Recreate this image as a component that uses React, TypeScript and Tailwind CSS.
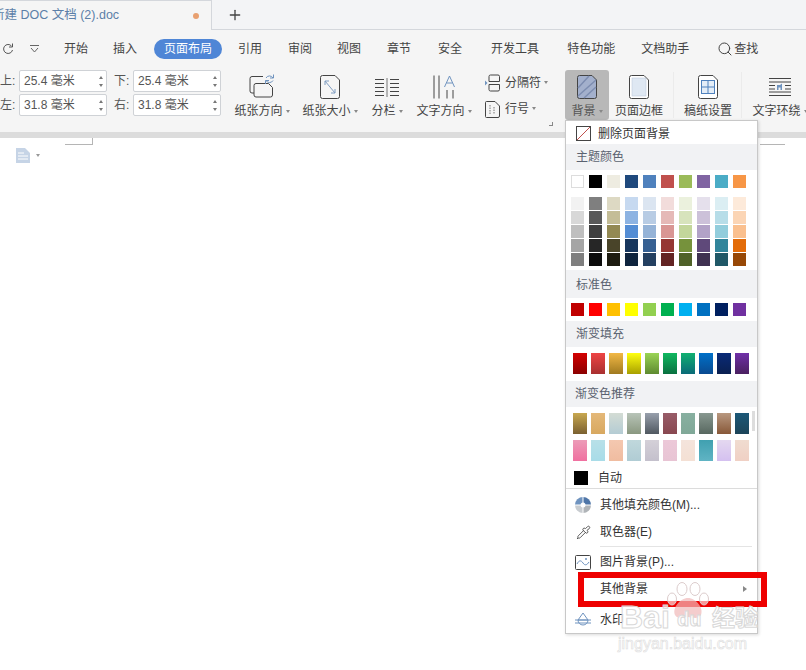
import { Pipette, Plus, Search } from "lucide-react";

const tabs = [
  { label: "开始", className: "ml-[25px]" },
  { label: "插入", className: "ml-[25px]" },
  { label: "页面布局", className: "ml-[17px] w-[68px] h-[20px] rounded-full bg-[#4f86d6] text-white text-center leading-[20px]" },
  { label: "引用", className: "ml-[16px]" },
  { label: "审阅", className: "ml-[26px]" },
  { label: "视图", className: "ml-[25px]" },
  { label: "章节", className: "ml-[26px]" },
  { label: "安全", className: "ml-[27px]" },
  { label: "开发工具", className: "ml-[29px]" },
  { label: "特色功能", className: "ml-[28px]" },
  { label: "文档助手", className: "ml-[26px]" },
];

const themeColors = [
  "bg-white border border-[#dddddd]",
  "bg-[#000000]",
  "bg-[#eeece1]",
  "bg-[#1f497d]",
  "bg-[#4f81bd]",
  "bg-[#c0504d]",
  "bg-[#9bbb59]",
  "bg-[#8064a2]",
  "bg-[#4bacc6]",
  "bg-[#f79646]",
];

const tints = [
  ["bg-[#f2f2f2]", "bg-[#d8d8d8]", "bg-[#bfbfbf]", "bg-[#a5a5a5]", "bg-[#7f7f7f]"],
  ["bg-[#7f7f7f]", "bg-[#595959]", "bg-[#3f3f3f]", "bg-[#262626]", "bg-[#0c0c0c]"],
  ["bg-[#ddd9c3]", "bg-[#c4bd97]", "bg-[#938953]", "bg-[#494429]", "bg-[#1d1b10]"],
  ["bg-[#c6d9f0]", "bg-[#8db3e2]", "bg-[#548dd4]", "bg-[#17365d]", "bg-[#0f243e]"],
  ["bg-[#dbe5f1]", "bg-[#b8cce4]", "bg-[#95b3d7]", "bg-[#366092]", "bg-[#244061]"],
  ["bg-[#f2dcdb]", "bg-[#e5b9b7]", "bg-[#d99694]", "bg-[#953734]", "bg-[#632423]"],
  ["bg-[#ebf1dd]", "bg-[#d7e3bc]", "bg-[#c3d69b]", "bg-[#76923c]", "bg-[#4f6128]"],
  ["bg-[#e5e0ec]", "bg-[#ccc1d9]", "bg-[#b2a2c7]", "bg-[#5f497a]", "bg-[#3f3151]"],
  ["bg-[#dbeef3]", "bg-[#b7dde8]", "bg-[#92cddc]", "bg-[#31859b]", "bg-[#205867]"],
  ["bg-[#fdeada]", "bg-[#fbd5b5]", "bg-[#fac08f]", "bg-[#e36c09]", "bg-[#974806]"],
];

const standardColors = [
  "bg-[#c00000]",
  "bg-[#ff0000]",
  "bg-[#ffc000]",
  "bg-[#ffff00]",
  "bg-[#92d050]",
  "bg-[#00b050]",
  "bg-[#00b0f0]",
  "bg-[#0070c0]",
  "bg-[#002060]",
  "bg-[#7030a0]",
];

const gradientFills = [
  "bg-[linear-gradient(#d40000,#8a0000)]",
  "bg-[linear-gradient(#ee4444,#a83030)]",
  "bg-[linear-gradient(#f2b845,#a07a20)]",
  "bg-[linear-gradient(#ffff10,#a8a000)]",
  "bg-[linear-gradient(#9ad455,#5e8a30)]",
  "bg-[linear-gradient(#10b860,#0a7040)]",
  "bg-[linear-gradient(#10b070,#0a6a78)]",
  "bg-[linear-gradient(#0070c8,#0a4a90)]",
  "bg-[linear-gradient(#0a2a78,#0a2050)]",
  "bg-[linear-gradient(#7030a8,#4a2060)]",
];

const galleryTop = [
  "bg-[linear-gradient(#c8a850,#7a6030)]",
  "bg-[linear-gradient(#e4b878,#d8a860)]",
  "bg-[linear-gradient(#d4dcd4,#b4ccd4)]",
  "bg-[linear-gradient(#b8c4b8,#8a9880)]",
  "bg-[linear-gradient(#98a0ac,#505860)]",
  "bg-[linear-gradient(#985c68,#884850)]",
  "bg-[linear-gradient(#88b0a0,#80a898)]",
  "bg-[linear-gradient(#889890,#586860)]",
  "bg-[linear-gradient(#b89880,#885838)]",
  "bg-[linear-gradient(#1c5878,#1c4458)]",
];

const galleryBottom = [
  "bg-[linear-gradient(#ec9cb8,#f070a0)]",
  "bg-[linear-gradient(#b8e0e8,#a8dce8)]",
  "bg-[linear-gradient(#f4c8b0,#f0bca0)]",
  "bg-[linear-gradient(#c0d8dc,#b0ccd4)]",
  "bg-[linear-gradient(#d4d0d8,#c4c0cc)]",
  "bg-[linear-gradient(#ecc8d8,#e8c4d4)]",
  "bg-[linear-gradient(#f4e4dc,#f4e0d4)]",
  "bg-[linear-gradient(#40a0b0,#60b4c4)]",
  "bg-[linear-gradient(#e4d8f0,#d4c0f0)]",
  "bg-[linear-gradient(#f0dcd0,#f0d0c4)]",
];

function Caret() {
  return <span className="inline-block ml-[3px] mb-[2px] border-x-[2.5px] border-t-[3px] border-x-transparent border-t-[#888888]" />;
}

function Spinner({ label, value }: { label: string; value: string }) {
  return (
    <div className="flex items-center h-[22px]">
      <span className="w-[19px] text-[#555555]">{label}</span>
      <div className="flex items-center justify-between w-[88px] h-[22px] pl-[4px] pr-[3px] bg-white border border-[#cfd2d6] rounded-[2px] text-[#555555]">
        <span>{value}</span>
        <span className="flex flex-col gap-[5px]">
          <span className="border-x-[2.5px] border-b-[3px] border-x-transparent border-b-[#777777]" />
          <span className="border-x-[2.5px] border-t-[3px] border-x-transparent border-t-[#777777]" />
        </span>
      </div>
    </div>
  );
}

function RibbonButton({ label, icon, className, caret = true }: { label: string; icon: React.ReactNode; className: string; caret?: boolean }) {
  return (
    <div className={`flex flex-col items-center shrink-0 h-[50px] ${className}`}>
      <div className="h-[30px] flex items-center justify-center mt-[2px]">{icon}</div>
      <div className="whitespace-nowrap leading-[16px] mt-[1px]">
        {label}
        {caret && <Caret />}
      </div>
    </div>
  );
}

function Section({ title, className }: { title: string; className: string }) {
  return <div className={`flex items-center pl-[10px] bg-[#f1f2f4] text-[#5a6270] ${className}`}>{title}</div>;
}

function MenuRow({ icon, label, className, arrow }: { icon?: React.ReactNode; label: string; className: string; arrow?: boolean }) {
  return (
    <div className={`flex items-center text-[#333333] ${className}`}>
      <div className="w-[34px] flex justify-center shrink-0">{icon}</div>
      <span>{label}</span>
      {arrow && <span className="ml-auto mr-[10px] border-y-[3px] border-l-[4px] border-y-transparent border-l-[#888888]" />}
    </div>
  );
}

function SwatchRow({ colors, className }: { colors: string[]; className: string }) {
  return (
    <div className={`flex gap-[5px] ${className}`}>
      {colors.map((c, i) => (
        <div key={i} className={`w-[13px] h-[13px] ${c}`} />
      ))}
    </div>
  );
}

function GradientRow({ colors, className }: { colors: string[]; className: string }) {
  return (
    <div className={`flex gap-[4px] ${className}`}>
      {colors.map((c, i) => (
        <div key={i} className={`w-[14px] h-[21px] ${c}`} />
      ))}
    </div>
  );
}

function Page({ children, fill = "none" }: { children?: React.ReactNode; fill?: string }) {
  return (
    <svg width="20" height="24" viewBox="0 0 20 24" fill="none">
      <path d="M2.5 .5H15L19.5 5V21.5a2 2 0 0 1-2 2H2.5a2 2 0 0 1-2-2V2.5a2 2 0 0 1 2-2Z" fill={fill} stroke="#444" />
      {children}
    </svg>
  );
}

export default function App() {
  return (
    <div className="relative w-[806px] h-[670px] overflow-hidden bg-white text-[12px] text-[#444444] font-['Liberation_Sans','Noto_Sans_CJK_SC',sans-serif]">
      {/* title bar */}
      <div className="flex h-[30px] bg-[#f3f4f6] border-b border-[#d4d7dc]">
        <div className="flex items-center w-[212px] h-[30px] bg-[#f5f5f5] border-t border-r border-[#d4d7dc] overflow-hidden">
          <span className="ml-[-8px] text-[12.5px] text-[#5c7fa8] whitespace-nowrap">新建 DOC 文档 (2).doc</span>
          <span className="ml-auto mr-[12px] w-[6px] h-[6px] rounded-full bg-[#e8a070]" />
        </div>
        <Plus className="ml-[15px] mt-[7px] text-[#444444]" size={16} strokeWidth={2} />
      </div>

      {/* tab strip */}
      <div className="flex items-center h-[32px] bg-[#f5f5f5] pt-[6px]">
        <svg className="ml-[2px] shrink-0" width="12" height="12" viewBox="0 0 12 12" fill="none">
          <path d="M9.5 3A4.5 4.5 0 1 0 10.5 7" stroke="#555" />
          <path d="M10.5 .5V4H7" stroke="#555" />
        </svg>
        <svg className="ml-[16px] shrink-0" width="9" height="8" viewBox="0 0 9 8" fill="none" stroke="#666">
          <path d="M0 .5H9M1 3L4.5 7L8 3" />
        </svg>
        {tabs.map((t) => (
          <span key={t.label} className={`shrink-0 ${t.className}`}>
            {t.label}
          </span>
        ))}
        <Search className="ml-[28px] shrink-0 text-[#444444]" size={16} strokeWidth={1.5} />
        <span className="ml-px">查找</span>
      </div>

      {/* ribbon */}
      <div className="relative flex h-[70px] pt-[8px] bg-[#f5f5f5] overflow-hidden">
        <div className="flex flex-col gap-[2px] shrink-0">
          <Spinner label="上:" value="25.4 毫米" />
          <Spinner label="左:" value="31.8 毫米" />
        </div>
        <div className="flex flex-col gap-[2px] ml-[7px] shrink-0">
          <Spinner label="下:" value="25.4 毫米" />
          <Spinner label="右:" value="31.8 毫米" />
        </div>
        <RibbonButton
          label="纸张方向"
          className="w-[58px] ml-[12px]"
          icon={
            <svg width="26" height="26" viewBox="0 0 26 26" fill="none" stroke="#444">
              <path d="M14 2.5H3a2 2 0 0 0-2 2V17a2 2 0 0 0 2 2H5" />
              <path d="M7 9.5H19.5L23.5 13.5V21a2 2 0 0 1-2 2H7a2 2 0 0 1-2-2V11.5a2 2 0 0 1 2-2Z" fill="#f5f5f5" />
              <path d="M17 4a4 4 0 0 1 7 0M24 6.5a4 4 0 0 1-7 0" stroke="#6f93bf" />
              <path d="M24.5 .5V4H21M16.5 10V6.5H20" stroke="#6f93bf" />
            </svg>
          }
        />
        <RibbonButton
          label="纸张大小"
          className="w-[56px] ml-[11px]"
          icon={
            <Page>
              <path d="M5 6L15 18M5 6V10M5 6H9M15 18V14M15 18H11" stroke="#7f9cc0" />
            </Page>
          }
        />
        <RibbonButton
          label="分栏"
          className="w-[34px] ml-[12px]"
          icon={
            <svg width="24" height="19" viewBox="0 0 24 19" stroke="#444" fill="none">
              <path d="M0 1.5H9M0 5.5H9M0 9.5H9M0 13.5H9M0 17.5H9M15 1.5H24M15 5.5H24M15 9.5H24M15 13.5H24M15 17.5H24" />
              <path d="M12 0V19" stroke="#777" />
            </svg>
          }
        />
        <RibbonButton
          label="文字方向"
          className="w-[56px] ml-[12px]"
          icon={
            <svg width="22" height="24" viewBox="0 0 22 24" fill="none" stroke="#444">
              <path d="M1 .5V23.5M6 .5V23.5M14 15V23.5M20 15V23.5" />
              <path d="M11.5 12L16.5 1L21.5 12M13.5 8H19.5" stroke="#6f93bf" />
            </svg>
          }
        />
        <div className="flex flex-col gap-[8px] ml-[13px] w-[66px] shrink-0 pt-[4px]">
          <div className="flex items-center h-[18px]">
            <svg width="15" height="18" viewBox="0 0 15 18" fill="none" stroke="#444" className="shrink-0">
              <path d="M4 7.5V2.5a1.5 1.5 0 0 1 1.5-1.5H13a1.5 1.5 0 0 1 1.5 1.5V7.5H4ZM4 10.5H14.5V15.5a1.5 1.5 0 0 1-1.5 1.5H5.5A1.5 1.5 0 0 1 4 15.5Z" />
              <path d="M0 6.5L2.5 9L0 11.5Z" fill="#6f93bf" stroke="none" />
            </svg>
            <span className="ml-[5px] whitespace-nowrap">分隔符</span>
            <Caret />
          </div>
          <div className="flex items-center h-[18px]">
            <svg width="15" height="17" viewBox="0 0 15 17" fill="none" stroke="#444" className="shrink-0">
              <path d="M1.5 .5H10L14.5 5V15a1.5 1.5 0 0 1-1.5 1.5H1.5A1 1 0 0 1 .5 15.5V1.5a1 1 0 0 1 1-1Z" />
              <path d="M5 4V13M9 6V13" stroke="#777" strokeDasharray="1.5 1" />
            </svg>
            <span className="ml-[5px] whitespace-nowrap">行号</span>
            <Caret />
          </div>
        </div>
        <div className="absolute left-[549px] top-[60px] w-[4px] h-[4px] border-r border-b border-[#888888]" />
        <RibbonButton
          label="背景"
          className="w-[44px] ml-[14px] bg-[#b8b8b8] rounded-[3px] text-[#555555]"
          icon={
            <Page fill="#a3b0cc">
              <path d="M1 13L12 1M1 21L19 5M7 23L19 12" stroke="#7d8db0" strokeWidth="1.5" />
            </Page>
          }
        />
        <RibbonButton
          label="页面边框"
          className="w-[50px] ml-[5px]"
          caret={false}
          icon={
            <Page fill="#ffffff">
              <rect x="3" y="3" width="14" height="18" fill="#dfe8f3" stroke="#b6c4d6" strokeWidth=".5" />
            </Page>
          }
        />
        <div className="w-px h-[46px] ml-[9px] mt-[2px] bg-[#ebebeb] shrink-0" />
        <RibbonButton
          label="稿纸设置"
          className="w-[50px] ml-[9px]"
          caret={false}
          icon={
            <Page fill="#ffffff">
              <rect x="3.5" y="5.5" width="13" height="13" fill="#e4edf7" stroke="#4f81bd" />
              <path d="M10 5.5V18.5M3.5 12H16.5" stroke="#4f81bd" />
            </Page>
          }
        />
        <div className="w-px h-[46px] ml-[8px] mt-[2px] bg-[#ebebeb] shrink-0" />
        <RibbonButton
          label="文字环绕"
          className="w-[56px] ml-[10px]"
          icon={
            <svg width="24" height="20" viewBox="0 0 24 20" stroke="#444" fill="none">
              <path d="M1 1.5H23M1 5H23M1 8.5H7M17 8.5H23M1 12H7M17 12H23M1 15H23M1 18.5H23" />
              <path d="M9 8H12L14 6.5V13H12.5V10.5H10.5V13H9Z" fill="#6f93bf" stroke="none" />
            </svg>
          }
        />
      </div>

      {/* gray strip under ribbon */}
      <div className="h-[6px] bg-[#dcdcdc]" />

      {/* document page */}
      <div className="relative h-[532px] bg-white">
        <div className="absolute left-[65px] top-[6px] w-[28px] h-[1px] bg-[#b5b5b5]" />
        <div className="absolute left-[92px] top-0 w-[1px] h-[7px] bg-[#b5b5b5]" />
        <div className="absolute left-[760px] top-[6px] w-[25px] h-[1px] bg-[#b5b5b5]" />
        <div className="absolute left-[16px] top-[10px] flex items-center">
          <svg width="14" height="15" viewBox="0 0 14 15">
            <path d="M0 0H9L14 5V15H0Z" fill="#c6d4e6" />
            <path d="M2 5H8M2 8H12M2 11H12" stroke="#fff" />
          </svg>
          <span className="ml-[6px] border-x-[2.5px] border-t-[3px] border-x-transparent border-t-[#999999]" />
        </div>
      </div>

      {/* background dropdown */}
      <div className="absolute left-[565px] top-[120px] w-[193px] h-[514px] bg-white border border-[#c8c8c8] shadow-[1px_1px_3px_rgba(0,0,0,0.15)]">
        <MenuRow
          className="h-[23px] pt-[2px] [&>span]:-ml-[2px]"
          label="删除页面背景"
          icon={
            <svg width="15" height="15" viewBox="0 0 15 15" fill="none">
              <rect x=".5" y=".5" width="14" height="14" stroke="#444" />
              <path d="M1 14L14 1" stroke="#c0504d" />
            </svg>
          }
        />
        <Section title="主题颜色" className="h-[26px]" />
        <SwatchRow colors={themeColors} className="pl-[5px] pt-[5px] h-[27px]" />
        <div className="flex gap-[5px] pl-[5px] h-[71px]">
          {tints.map((col, i) => (
            <div key={i} className="flex flex-col gap-px">
              {col.map((c, j) => (
                <div key={j} className={`w-[13px] h-[13px] ${c}`} />
              ))}
            </div>
          ))}
        </div>
        <Section title="标准色" className="h-[28px] mt-[2px] pt-[1px]" />
        <SwatchRow colors={standardColors} className="pl-[5px] pt-[5px] h-[23px]" />
        <Section title="渐变填充" className="h-[26px]" />
        <GradientRow colors={gradientFills} className="pl-[7px] pt-[6px] h-[34px]" />
        <Section title="渐变色推荐" className="h-[26px] !pl-[9px]" />
        <div className="relative h-[59px]">
          <GradientRow colors={galleryTop} className="pl-[7px] pt-[6px] h-[33px]" />
          <GradientRow colors={galleryBottom} className="pl-[7px]" />
          <div className="absolute left-[186px] top-[4px] w-[3px] h-[20px] bg-[#dddddd]" />
        </div>
        <div className="flex items-center h-[22px] pt-[2px] pl-[8px]">
          <div className="w-[14px] h-[14px] bg-black" />
          <span className="ml-[10px] text-[#333333]">自动</span>
        </div>
        <div className="h-px bg-[#dcdcdc]" />
        <MenuRow
          className="h-[31px]"
          label="其他填充颜色(M)..."
          icon={
            <svg width="16" height="16" viewBox="0 0 16 16">
              <path d="M8 8V0A8 8 0 0 0 0 8Z" fill="#6f93bf" />
              <path d="M8 8V0A8 8 0 0 1 16 8Z" fill="#4f76a8" />
              <path d="M8 8H0A8 8 0 0 0 8 16Z" fill="#c8ccd0" />
              <path d="M8 8H16A8 8 0 0 1 8 16Z" fill="#b0b4b8" />
              <circle cx="8" cy="8" r="2.5" fill="#fff" />
              <path d="M8 0V16M0 8H16" stroke="#fff" />
            </svg>
          }
        />
        <MenuRow className="h-[24px]" label="取色器(E)" icon={<Pipette size={15} strokeWidth={1.25} className="text-[#333333]" />} />
        <div className="h-px ml-[34px] mr-[5px] mt-[2px] bg-[#e4e4e4]" />
        <MenuRow
          className="h-[28px] pt-[2px]"
          label="图片背景(P)..."
          icon={
            <svg width="16" height="15" viewBox="0 0 16 15" fill="none">
              <rect x=".5" y=".5" width="15" height="14" rx="1" stroke="#444" />
              <path d="M2 9C4 5 6 5 8 8S12 10 14 7" stroke="#6f93bf" />
              <circle cx="11" cy="4" r="1" fill="#6f93bf" />
            </svg>
          }
        />
        <MenuRow className="h-[27px]" label="其他背景" arrow />
        <MenuRow
          className="h-[35px]"
          label="水印"
          icon={
            <svg width="16" height="15" viewBox="0 0 16 15" fill="none" stroke="#6f93bf">
              <path d="M8 1L3 8H13ZM3 8A5 5 0 0 0 13 8" />
              <path d="M0 8H16M0 11H16" />
            </svg>
          }
        />
      </div>

      {/* red highlight */}
      <div className="absolute left-[578px] top-[572px] w-[189px] h-[35px] border-[6px] border-[#ee0000]" />

      {/* baidu watermark */}
      <div className="absolute left-[618px] top-[582px] w-[188px] h-[72px] pointer-events-none">
        <svg width="44" height="40" viewBox="0 0 44 40" className="absolute left-[48px] top-0" fill="#ffffff" fillOpacity="0.6" stroke="#dccccc">
          <ellipse cx="6" cy="17" rx="4.5" ry="6" />
          <ellipse cx="16" cy="7" rx="5" ry="6.5" />
          <ellipse cx="29" cy="7" rx="5" ry="6.5" />
          <ellipse cx="38" cy="17" rx="4.5" ry="6" />
          <path d="M22 16C14 16 6 26 9 33C12 38 18 35 22 35S32 38 35 33C38 26 30 16 22 16Z" fill="#f0b8b8" fillOpacity="0.7" stroke="none" />
        </svg>
        <span className="absolute left-[2px] top-[19px] text-[32px] leading-[32px] font-bold text-white/70 [-webkit-text-stroke:1px_#d8d8d8] whitespace-nowrap">Bai</span>
        <span className="absolute left-[59px] top-[26px] text-[20px] leading-[22px] font-bold text-white/80 [-webkit-text-stroke:1px_#d8d8d8] whitespace-nowrap">du</span>
        <span className="absolute left-[94px] top-[24px] text-[23px] leading-[24px] font-bold text-white/70 [-webkit-text-stroke:1px_#d8d8d8] whitespace-nowrap">经验</span>
        <span className="absolute left-0 top-[52px] text-[16px] leading-[20px] text-white [-webkit-text-stroke:0.6px_#dcdcdc] whitespace-nowrap">jingyan.baidu.com</span>
      </div>
    </div>
  );
}
